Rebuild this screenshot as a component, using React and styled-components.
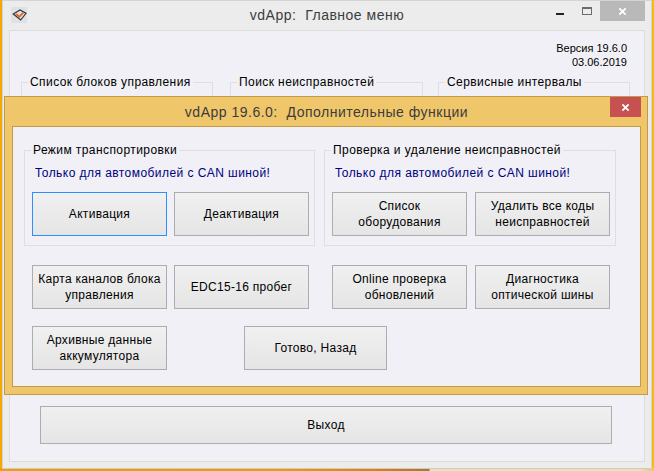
import styled, { createGlobalStyle } from 'styled-components';

const GlobalCss = createGlobalStyle`
  * {
    margin: 0;
    padding: 0;
    box-sizing: border-box;
  }

  html, body {
    width: 654px;
    height: 471px;
    overflow: hidden;
  }

  body {
    font-family: "Liberation Sans", Arial, sans-serif;
    font-size: 12px;
    color: #000;
  }
`;

const Desktop = styled.div`
  position: relative;
  width: 654px;
  height: 471px;
  padding: 0 2px 2px 2px;
  background:
    linear-gradient(90deg, #f39c0a 0, #f29a0a 275px, #e08010 375px, #a07a30 429px, #f4dcb8 430px, #f4dcb8 640px, #f5c060 100%) bottom / 100% 3px no-repeat,
    linear-gradient(90deg, #f5a900 0, #f5a900 50%, #f6bc12 100%);
`;

const MainWindow = styled.div`
  display: flex;
  flex-direction: column;
  height: 100%;
  padding: 0 6px 6px 6px;
  background: #ececec;
  border: 1px solid #d4d4d4;
  border-bottom-color: #c8cccc;
`;

const TitleBar = styled.header`
  position: relative;
  display: flex;
  align-items: center;
  justify-content: center;
  flex: 0 0 29px;
  padding-bottom: ${({ $pb }) => $pb || 0}px;
  font-size: 14px;
  letter-spacing: 0.5px;
  color: #3c3c3c;
  white-space: pre;
`;

const AppIcon = styled.svg`
  position: absolute;
  left: 2px;
  top: 6px;
  width: 16px;
  height: 16px;
  background: #dde2e6;
`;

const WindowButtons = styled.div`
  position: absolute;
  right: 0;
  top: 0;
  display: flex;
  align-items: flex-start;
`;

const MinGlyph = styled.div`
  width: 8px;
  height: 2px;
  margin-top: 12px;
  background: #222;
`;

const MaxGlyph = styled.div`
  width: 10px;
  height: 8px;
  margin: 6px 8px 0 18px;
  border: 1px solid #6c6c6c;
  border-top-width: 2px;
`;

const CloseButton = styled.div`
  display: flex;
  align-items: center;
  justify-content: center;
  width: ${({ $w }) => $w}px;
  height: 20px;
  background: ${({ $bg }) => $bg};
`;

const Client = styled.main`
  display: flex;
  flex-direction: column;
  flex: 1;
  padding: 10px 11px 17px 11px;
  background: #f0f0f6;
  border: 1px solid #dcdcdc;
`;

const VersionInfo = styled.div`
  align-self: flex-end;
  margin-right: 6px;
  font-size: 11px;
  line-height: 14px;
  text-align: right;
`;

const TopGroups = styled.div`
  display: flex;
  gap: 17px;
  margin-top: 5px;
`;

const Group = styled.fieldset`
  min-width: 0;
  width: ${({ $w }) => $w}px;
  height: ${({ $h }) => $h}px;
  margin-left: ${({ $shift }) => $shift || 0}px;
  padding: 0 0 0 7px;
  border: 1px solid #dfdfe3;
`;

const Legend = styled.legend`
  margin-left: -1px;
  padding: 0 2px;
  font-size: 12px;
  line-height: 16px;
  letter-spacing: 0.42px;
  white-space: nowrap;
`;

const ExitButton = styled.button`
  align-self: flex-start;
  width: 572px;
  height: 38px;
  margin: auto 0 0 19px;
  font-family: inherit;
  font-size: 12px;
  letter-spacing: 0.3px;
  color: #000;
  background: linear-gradient(#f0f0f0, #e5e5e5);
  border: 1px solid #adadad;
`;

const Dialog = styled.section`
  position: absolute;
  left: 4px;
  top: 96px;
  display: flex;
  flex-direction: column;
  width: 644px;
  height: 299px;
  padding: 0 6px 7px 7px;
  background: #f0c66a;
  border: 1px solid #c19c48;
`;

const DialogClient = styled.div`
  flex: 1;
  padding: 15px 0 0 11px;
  background: #f0f0f6;
  border: 1px solid #c19c48;
`;

const DialogGroups = styled.div`
  display: flex;
  gap: 9px;
`;

const Note = styled.p`
  margin: 7px 0 0 3px;
  font-size: 12px;
  line-height: 16px;
  letter-spacing: 0.44px;
  color: #000080;
  white-space: nowrap;
`;

const Row = styled.div`
  display: flex;
  gap: ${({ $gap }) => $gap || 7}px;
  margin-top: ${({ $mt }) => $mt}px;
  margin-left: ${({ $ml }) => $ml || 0}px;
`;

const Pair = styled.div`
  display: flex;
  gap: ${({ $gap }) => $gap}px;
`;

const Button = styled.button`
  flex: none;
  width: ${({ $w }) => $w || 135}px;
  height: 44px;
  font-family: inherit;
  font-size: 12px;
  line-height: 16px;
  letter-spacing: 0.3px;
  color: #000;
  background: linear-gradient(#f0f0f0, #e5e5e5);
  border: 1px solid ${({ $focused }) => ($focused ? '#2b90ff' : '#adadad')};
`;

function CrossIcon({ size }) {
  return (
    <svg width={size} height={size} viewBox="0 0 10 10">
      <path d="M1.5 1.5 8.5 8.5M8.5 1.5 1.5 8.5" stroke="#fff" strokeWidth="2" />
    </svg>
  );
}

export default function App() {
  return (
    <Desktop>
      <GlobalCss />
      <MainWindow>
        <TitleBar $pb={1}>
          <AppIcon viewBox="0 0 16 16">
            <path d="M2.300 7 9 3 15 6.300 9.700 13Z" fill="none" stroke="#333" strokeWidth="1.200" />
            <path d="M5 7 8.300 9.700 12.300 5.700" fill="none" stroke="#e8641e" strokeWidth="1.800" />
          </AppIcon>
          {'vdApp:  Главное меню'}
          <WindowButtons>
            <MinGlyph />
            <MaxGlyph />
            <CloseButton $w={45} $bg="#b9b9b9"><CrossIcon size={9} /></CloseButton>
          </WindowButtons>
        </TitleBar>
        <Client>
          <VersionInfo>
            <div>Версия 19.6.0</div>
            <div>03.06.2019</div>
          </VersionInfo>
          <TopGroups>
            <Group $w={192} $h={40}><Legend>Список блоков управления</Legend></Group>
            <Group $w={193} $h={40}><Legend>Поиск неисправностей</Legend></Group>
            <Group $w={192} $h={40} $shift={-2}><Legend>Сервисные интервалы</Legend></Group>
          </TopGroups>
          <ExitButton>Выход</ExitButton>
        </Client>
      </MainWindow>

      <Dialog>
        <TitleBar>
          {'vdApp 19.6.0:  Дополнительные функции'}
          <WindowButtons>
            <CloseButton $w={31} $bg="#c75050"><CrossIcon size={9} /></CloseButton>
          </WindowButtons>
        </TitleBar>
        <DialogClient>
          <DialogGroups>
            <Group $w={291} $h={104}>
              <Legend>Режим транспортировки</Legend>
              <Note>Только для автомобилей с CAN шиной!</Note>
              <Row $mt={11}>
                <Button $focused>Активация</Button>
                <Button>Деактивация</Button>
              </Row>
            </Group>
            <Group $w={292} $h={104}>
              <Legend>Проверка и удаление неисправностей</Legend>
              <Note>Только для автомобилей с CAN шиной!</Note>
              <Row $mt={11} $gap={8}>
                <Button>Список<br />оборудования</Button>
                <Button>Удалить все коды<br />неисправностей</Button>
              </Row>
            </Group>
          </DialogGroups>
          <Row $mt={19} $ml={8} $gap={23}>
            <Pair $gap={7}>
              <Button>Карта каналов блока<br />управления</Button>
              <Button>EDC15-16 пробег</Button>
            </Pair>
            <Pair $gap={8}>
              <Button>Online проверка<br />обновлений</Button>
              <Button>Диагностика<br />оптической шины</Button>
            </Pair>
          </Row>
          <Row $mt={17} $ml={8} $gap={77}>
            <Button>Архивные данные<br />аккумулятора</Button>
            <Button $w={143}>Готово, Назад</Button>
          </Row>
        </DialogClient>
      </Dialog>
    </Desktop>
  );
}
